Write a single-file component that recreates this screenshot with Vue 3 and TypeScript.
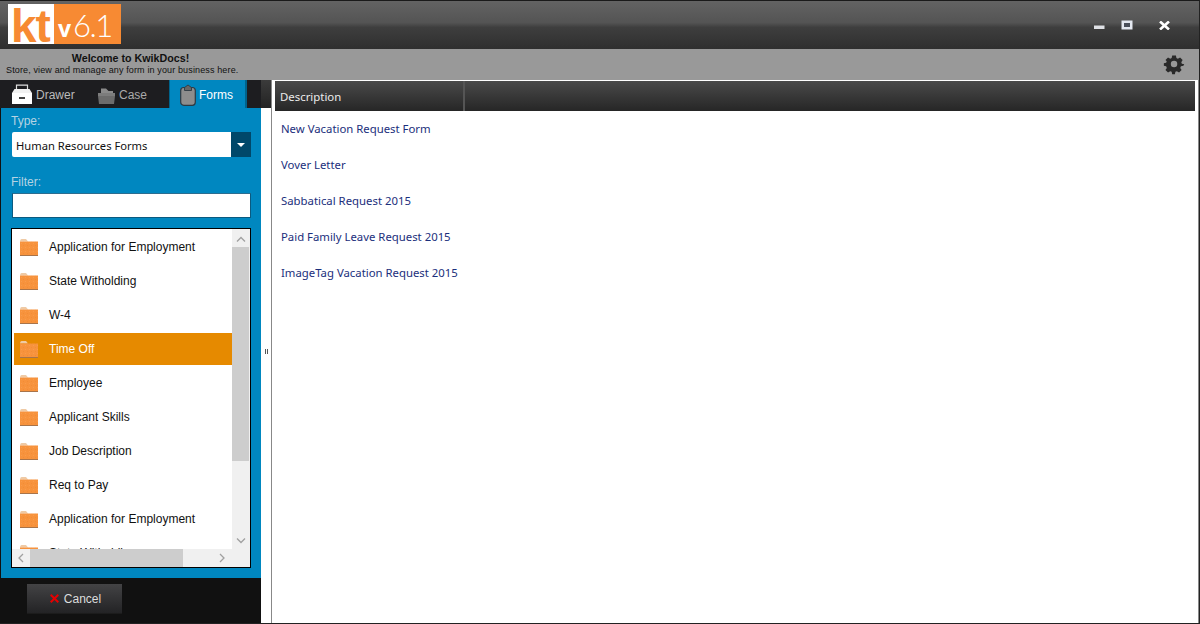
<script setup lang="ts">
const items: string[] = ['Application for Employment','State Witholding','W-4','Time Off','Employee','Applicant Skills','Job Description','Req to Pay','Application for Employment','State Witholding']
const docs: string[] = ['New Vacation Request Form','Vover Letter','Sabbatical Request 2015','Paid Family Leave Request 2015','ImageTag Vacation Request 2015']
</script>

<template>
  <div class="win">
    <header class="title">
      <div class="logo">
        <span class="kt">kt</span>
        <span class="ver"><b>v</b>6.1</span>
      </div>
      <div class="controls">
        <svg class="ctl" width="12" height="12" viewBox="0 0 12 12"><rect x="1" y="5.5" width="10.5" height="3.5" fill="#dfe1e6"/></svg>
        <svg class="ctl max" width="12" height="10" viewBox="0 0 12 10"><rect x="0.5" y="0.5" width="11" height="9" fill="#e4e8f0"/><rect x="3" y="3" width="6" height="4" fill="#4a4f5a"/></svg>
        <svg class="ctl cls" width="11" height="9" viewBox="0 0 11 9"><path d="M1 .5L10 8.5M10 .5L1 8.5" stroke="#fff" stroke-width="2.6"/></svg>
      </div>
    </header>
    <div class="welcome">
      <div class="wtext">
        <div class="w1">Welcome to KwikDocs!</div>
        <div class="w2">Store, view and manage any form in your business here.</div>
      </div>
      <svg class="gear" width="22" height="22" viewBox="0 0 22 22">
        <path fill-rule="evenodd" fill="#2a2a2a" d="M8.8 1h4.4l.6 3 1.7.8 2.6-1.6 3 3-1.6 2.6.7 1.7 2.8.6v0L22 13l-2.9.7-.8 1.8 1.6 2.5-3 3-2.6-1.6-1.7.7-.6 2.9H8.8l-.6-2.9-1.7-.7L3.9 21l-3-3 1.6-2.5-.8-1.8L-1 13v-2.9l2.7-.6.7-1.7L.9 6.2l3-3 2.6 1.6 1.7-.8z M11 7.2a3.8 3.8 0 1 0 0 7.6a3.8 3.8 0 1 0 0-7.6z" transform="translate(1.7 1.7) scale(.85)"/>
      </svg>
    </div>
    <main class="body">
      <aside class="left">
        <nav class="tabs">
          <div class="tab t1">
            <svg width="20" height="20" viewBox="0 0 20 20"><path d="M4.5 7V1.2h11V7" fill="none" stroke="#ddd" stroke-width="1.2"/><path d="M2.5 5h15l2.5 4H0z" fill="#f2f2f2"/><rect x="0" y="9" width="20" height="11" fill="#fff"/><rect x="7" y="13" width="6" height="2" fill="#444"/></svg>
            <span>Drawer</span>
          </div>
          <div class="tab t2">
            <svg width="17" height="17" viewBox="0 0 17 17"><path d="M3 6V1.5h5L10.5 4H15v2z" fill="#8a8a8a"/><path d="M0 6h17v3H0z" fill="#7c7c7c"/><path d="M0 9h17l-1 8H1z" fill="#6c6c6c"/></svg>
            <span>Case</span>
          </div>
          <div class="tab t3">
            <svg width="16" height="22" viewBox="0 0 16 22"><rect x=".7" y="3.5" width="14.6" height="17.8" rx="3" fill="#8d8d8d" stroke="#2c3a44" stroke-width="1.2"/><path d="M4.5 6.5V3.5L8 1l3.5 2.5v3z" fill="#666" stroke="#2c3a44" stroke-width=".9"/></svg>
            <span>Forms</span>
          </div>
        </nav>
        <section class="panel">
          <label class="lab">Type:</label>
          <div class="select">
            <span class="val">Human Resources Forms</span>
            <span class="arrow"><i></i></span>
          </div>
          <label class="lab lab2">Filter:</label>
          <div class="input"></div>
          <div class="list">
            <div class="rows">
              <div v-for="(it, i) in items" :key="i" class="row" :class="{ sel: i === 3 }">
                <svg class="folder" width="18" height="17" viewBox="0 0 18 17">
                  <defs>
                    <pattern :id="'sp' + i" width="4" height="4" patternUnits="userSpaceOnUse">
                      <rect width="4" height="4" fill="#f7933d"/>
                      <rect x="1" y="0" width="1" height="1" fill="#f99c4c"/>
                      <rect x="3" y="2" width="1" height="1" fill="#f28c36"/>
                    </pattern>
                  </defs>
                  <path d="M0 2.5Q0 0 1.5 0H6L8 2.5z" fill="#efcaa5"/>
                  <rect x="0" y="2.5" width="18" height="13.5" :fill="'url(#sp' + i + ')'"/>
                  <rect x="0" y="16" width="18" height="1" fill="#a8744a"/>
                </svg>
                <span>{{ it }}</span>
              </div>
            </div>
            <div class="vbar">
              <svg class="chev" width="10" height="6" viewBox="0 0 10 6"><path d="M1 5.5L5 1.5L9 5.5" fill="none" stroke="#a0a0a0" stroke-width="1.3"/></svg>
              <div class="vthumb"></div>
              <svg class="chev dn" width="10" height="6" viewBox="0 0 10 6"><path d="M1 .5L5 4.5L9 .5" fill="none" stroke="#a0a0a0" stroke-width="1.3"/></svg>
            </div>
            <div class="hbar">
              <svg width="6" height="10" viewBox="0 0 6 10"><path d="M5 1L1 5L5 9" fill="none" stroke="#a0a0a0" stroke-width="1.3"/></svg>
              <div class="hthumb"></div>
              <svg class="hnext" width="6" height="10" viewBox="0 0 6 10"><path d="M1 1L5 5L1 9" fill="none" stroke="#a0a0a0" stroke-width="1.3"/></svg>
            </div>
          </div>
        </section>
        <footer class="foot">
          <button class="cancel" type="button">
            <svg width="9" height="9" viewBox="0 0 9 9"><path d="M.7.7L8.3 8.3M8.3.7L.7 8.3" stroke="#e60000" stroke-width="2"/></svg>
            <span>Cancel</span>
          </button>
        </footer>
      </aside>
      <div class="split">
        <div class="splittop"></div>
        <div class="splitbody"><span class="grip"></span></div>
      </div>
      <section class="right">
        <div class="thead">
          <div class="th">Description</div>
        </div>
        <div class="doc" v-for="d in docs" :key="d">{{ d }}</div>
      </section>
    </main>
  </div>
</template>

<style>
html, body { margin: 0; padding: 0; background: #fff; overflow: hidden; }
</style>

<style scoped>
.win { width: 1200px; height: 624px; box-sizing: border-box; display: flex; flex-direction: column; font-family: "Liberation Sans", Arial, sans-serif; font-size: 12px; border-right: 1px solid #222; border-bottom: 1px solid #222; border-top: 1px solid #1a1a1a; overflow: hidden; background: #fff; }
.title { height: 48px; flex: none; display: flex; align-items: flex-start; justify-content: space-between; background: linear-gradient(#636363 0, #545454 45%, #3e3e3e 55%, #2f2f2f 100%); }
.logo { margin: 3px 0 0 8px; width: 113px; height: 40px; background: #f78a33; display: flex; color: #fff; }
.kt { box-sizing: border-box; width: 46px; height: 40px; background: #fff; color: #f78a33; font: 700 46px/40px "Liberation Sans", sans-serif; letter-spacing: -1px; padding: 2px 0 0 3px; white-space: nowrap; }
.ver { font: 300 31px/42px Lato, sans-serif; margin-left: 4px; letter-spacing: -1.5px; white-space: nowrap; }
.ver b { font: 700 23px/42px "Open Sans", sans-serif; letter-spacing: 0; margin-right: 2px; }
.controls { display: flex; align-items: center; margin: 19px 29px 0 0; }
.ctl { display: block; }
.max { margin-left: 16px; margin-bottom: 2px; }
.cls { margin-left: 26px; margin-bottom: 2px; }
.welcome { height: 31px; flex: none; background: #999; display: flex; align-items: center; justify-content: space-between; color: #111; }
.wtext { margin-left: 6px; }
.w1 { font-weight: 700; font-size: 10.7px; text-align: center; width: 249px; margin-left: 0; line-height: 12px; margin-top: -1px; }
.w2 { font-size: 9px; line-height: 12px; letter-spacing: .015em; }
.gear { margin-right: 14px; margin-top: -2px; }
.body { flex: 1; min-height: 0; display: flex; }
.left { width: 261px; flex: none; display: flex; flex-direction: column; background: #111; }
.tabs { height: 28px; flex: none; display: flex; background: #1d1d20; }
.tab { display: flex; align-items: center; height: 28px; font-size: 12px; color: #bbb; }
.tab span { display: block; padding-top: 1px; }
.t1 { width: 84px; padding-left: 12px; gap: 4px; box-sizing: border-box; }
.t2 { width: 85px; padding-left: 14px; gap: 4px; box-sizing: border-box; color: #aaa; }
.t2 svg { margin-top: 2px; }
.t3 { width: 78px; background: #0087c0; border-left: 1px solid #00638c; border-right: 2px solid #00638c; box-sizing: border-box; padding-left: 10px; gap: 3px; color: #fff; }
.t3 svg { margin-top: 2px; }
.panel { height: 470px; flex: none; background: #0087c0; border-left: 1px solid #111; box-sizing: border-box; display: flex; flex-direction: column; }
.lab { color: #b5d3e3; font-size: 12px; line-height: 14px; margin: 6px 0 0 10px; }
.lab2 { margin-top: 18px; }
.select { margin: 4px 0 0 11px; width: 239px; height: 25px; flex: none; background: #fff; display: flex; border-radius: 2px; box-sizing: border-box; }
.val { flex: 1; font: 11.2px/27px "Noto Sans", sans-serif; color: #111; padding-left: 4px; }
.arrow { width: 20px; background: #00486a; display: flex; align-items: center; justify-content: center; }
.arrow i { width: 0; height: 0; border: 4px solid transparent; border-top: 4px solid #fff; border-bottom: 0; }
.input { margin: 4px 0 0 11px; width: 239px; height: 25px; flex: none; background: #fff; box-sizing: border-box; border: 1px solid #0b5a80; border-top-color: #2c6d8f; }
.list { position: relative; margin: 10px 0 0 10px; width: 240px; height: 340px; flex: none; box-sizing: border-box; background: #fff; border: 1px solid #000; overflow: hidden; }
.rows { padding: 1px 0 0 2px; display: flex; flex-direction: column; }
.row { height: 32px; margin: 1px 0; width: 218px; flex: none; display: flex; align-items: center; color: #111; font-size: 12px; }
.row.sel { background: #e68a00; color: #fff; }
.folder { margin-left: 6px; margin-right: 11px; flex: none; }
.vbar { position: absolute; right: 0; top: 0; width: 18px; height: 320px; background: #f0f0f0; display: flex; flex-direction: column; align-items: flex-start; }
.chev { margin: 7px 0 0 4px; flex: none; }
.chev.dn { margin: auto 0 5px 4px; }
.vthumb { width: 17px; height: 214px; margin-top: 5px; background: #cdcdcd; }
.hbar { position: absolute; left: 0; bottom: 0; right: 0; height: 18px; background: #f0f0f0; display: flex; align-items: center; padding-left: 6px; }
.hthumb { width: 153px; height: 18px; margin-left: 6px; background: #cdcdcd; }
.hnext { margin-left: 36px; }
.foot { flex: 1; display: flex; align-items: flex-start; }
.cancel { margin: 6px 0 0 27px; width: 95px; height: 30px; display: flex; align-items: center; justify-content: center; gap: 5px; border: 0; border-bottom: 1px solid #1c1c1c; background: linear-gradient(#434345, #232325); color: #ddd; font: 12px "Liberation Sans", sans-serif; padding: 0 0 0 2px; }
.split { width: 10px; flex: none; display: flex; flex-direction: column; }
.splittop { height: 28px; flex: none; background: linear-gradient(#3b3b3b, #232323); }
.splitbody { flex: 1; display: flex; align-items: center; justify-content: center; background: #fff; padding-bottom: 28px; }
.grip { width: 3px; height: 5px; border-left: 1px solid #555; border-right: 1px solid #555; box-sizing: border-box; }
.right { flex: 1; min-width: 0; border-left: 1px solid #888; box-sizing: border-box; padding: 1px 3px 0 3px; background: #fff; border-right: 1px solid #888; }
.thead { height: 30px; background: linear-gradient(#4a4a4a, #262626); display: flex; }
.th { width: 190px; box-sizing: border-box; padding-left: 5px; font: 11.4px/32px "Noto Sans", sans-serif; color: #ececec; border-right: 2px solid #555; }
.doc { height: 36px; padding-left: 6px; font: 11.35px/36px "Noto Sans", sans-serif; color: #1b2f7c; }
</style>
